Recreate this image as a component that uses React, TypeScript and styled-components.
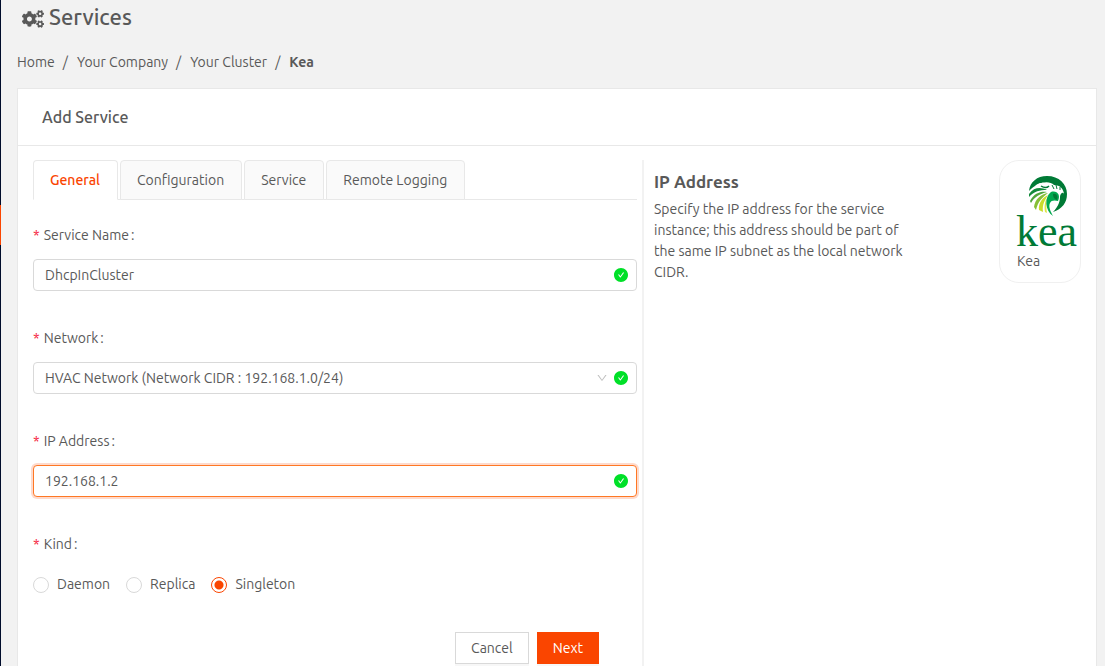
import React, { useState } from 'react';
import styled, { createGlobalStyle, css } from 'styled-components';
import { FaCogs } from 'react-icons/fa';
import { AiFillCheckCircle, AiOutlineDown } from 'react-icons/ai';

const INK = '#595959';
const ACCENT = '#fa4500';
const LINE = '#e8e8e8';

const GlobalStyle = createGlobalStyle`
  *, *::before, *::after { box-sizing: border-box; }
  html, body { margin: 0; }
  body {
    background: #f2f2f2;
    color: ${INK};
    font: 14px/21px Ubuntu, 'Noto Sans', 'Open Sans', sans-serif;
  }
  button, input, select { font: inherit; color: inherit; }
`;

const Shell = styled.div`
  display: flex;
  min-height: 100vh;
`;

const Rail = styled.div`
  flex: none;
  width: 1px;
  padding-top: 205px;
  background: #000c2b;
`;

const RailMarker = styled.div`
  height: 40px;
  background: ${ACCENT};
`;

const Page = styled.main`
  flex: 1;
  min-width: 0;
  display: flex;
  flex-direction: column;
  padding: 0 8px 0 16px;
`;

const PageTitle = styled.h1`
  display: flex;
  align-items: center;
  gap: 5px;
  margin: 0;
  padding: 1px 0 0 5px;
  font-size: 22px;
  line-height: 32px;
  font-weight: 500;

  svg { margin-top: 4px; }
`;

const Breadcrumb = styled.nav`
  padding: 19px 0 15px;

  ol {
    display: flex;
    margin: 0;
    padding: 0;
    list-style: none;
  }
  li + li::before {
    content: '/';
    padding: 0 9px 0 8px;
  }
  a {
    color: inherit;
    text-decoration: none;
  }
  strong { font-weight: 700; }
`;

const Card = styled.section`
  flex: 1;
  border: 1px solid ${LINE};
  border-bottom: 0;
  background: #fff;
`;

const CardTitle = styled.h2`
  margin: 0;
  padding: 16px 24px;
  border-bottom: 1px solid ${LINE};
  font-size: 16px;
  line-height: 24px;
  font-weight: 500;
`;

const CardBody = styled.div`
  display: grid;
  grid-template-columns: 611fr 437fr;
  padding: 14px 15px 0;
`;

const FormColumn = styled.form`
  padding-right: 5px;
  border-right: 2px solid #f2f2f2;
`;

const TabList = styled.div`
  display: flex;
  gap: 2px;
  height: 40px;
  box-shadow: inset 0 -1px ${LINE};
`;

const Tab = styled.button<{ $active: boolean }>`
  padding: 0 17px 0 16px;
  border: 1px solid ${LINE};
  border-radius: 4px 4px 0 0;
  background: #fafafa;
  ${(p) =>
    p.$active &&
    css`
      border-bottom-color: #fff;
      background: #fff;
      color: ${ACCENT};
      font-weight: 500;
    `}
`;

const Field = styled.div`
  margin-bottom: 37px;
`;

const Fields = styled.div`
  padding-top: 25px;
`;

const labelStyle = css`
  display: block;
  margin-bottom: 13px;
  padding: 0;
  &::before {
    content: '*';
    margin-right: 4px;
    color: #f5223d;
  }
  &::after {
    content: ':';
    margin-left: 2px;
  }
`;

const Label = styled.label`
  ${labelStyle}
`;

const Legend = styled.legend`
  ${labelStyle}
`;

const Control = styled.div`
  position: relative;
`;

const Status = styled.span`
  position: absolute;
  inset: 0 8px 0 auto;
  display: flex;
  align-items: center;
  gap: 5px;
  color: #00e028;
  pointer-events: none;
`;

const Chevron = styled(AiOutlineDown)`
  color: #bfbfbf;
`;

const controlStyle = css`
  display: block;
  width: 100%;
  height: 32px;
  padding: 0 11px;
  border: 1px solid #d9d9d9;
  border-radius: 4px;
  outline: 0;
  background: #fff;
`;

const TextInput = styled.input<{ $highlighted?: boolean }>`
  ${controlStyle}
  ${(p) =>
    p.$highlighted &&
    css`
      border-color: #ff7824;
      box-shadow: 0 0 0 2px rgba(250, 69, 0, 0.2);
    `}
`;

const Select = styled.select`
  ${controlStyle}
  appearance: none;
`;

const RadioGroup = styled.fieldset`
  margin: 0 0 37px;
  padding: 0;
  border: 0;
`;

const RadioRow = styled.div`
  display: flex;
  gap: 16px;
  padding-top: 6px;
`;

const RadioLabel = styled.label`
  display: flex;
  align-items: center;
  gap: 8px;
`;

const Radio = styled.input`
  appearance: none;
  width: 16px;
  height: 16px;
  margin: 0;
  border: 1px solid #d9d9d9;
  border-radius: 50%;
  background: #fff;
  &:checked {
    border-color: ${ACCENT};
    background: radial-gradient(circle, ${ACCENT} 4px, #fff 5px);
  }
`;

const Actions = styled.div`
  display: flex;
  justify-content: flex-end;
  gap: 8px;
  padding: 0 38px 24px 0;
`;

const Button = styled.button<{ $primary?: boolean }>`
  height: 32px;
  padding: 0 15px;
  border: 1px solid ${(p) => (p.$primary ? ACCENT : '#d9d9d9')};
  background: ${(p) => (p.$primary ? ACCENT : '#fff')};
  color: ${(p) => (p.$primary ? '#fff' : INK)};
  box-shadow: 0 2px 0 rgba(0, 0, 0, 0.03);
`;

const Help = styled.aside`
  display: flex;
  justify-content: space-between;
  align-items: flex-start;
  padding-left: 10px;
`;

const HelpText = styled.div`
  width: 264px;
  padding-top: 10px;

  h3 {
    margin: 0 0 5px;
    font-size: 17px;
    line-height: 24px;
    font-weight: 700;
  }
  p { margin: 0; }
`;

const ServiceTile = styled.figure`
  flex: none;
  width: 82px;
  margin: 0;
  padding: 13px 2px 10px 16px;
  border: 1px solid #f0f0f0;
  border-radius: 20px;

  svg { display: block; overflow: visible; }
  figcaption { padding: 4px 0 0 1px; }
`;

const KeaLogo = () => (
  <svg width="62" height="73" viewBox="0 0 62 73" role="img" aria-label="Kea">
    <path d="M13 17C14 8 21 2 31 2C43 2 51 10 51 20C51 29 46 35 37 38C41 34 44 29 44 23C44 19 48 17 48 21C48 15 44 11 38 11C33 6 21 8 13 17Z" fill="#007a36" />
    <path d="M20 12C25 9 30 9 34 13" fill="none" stroke="#fff" strokeWidth="2" />
    <path d="M25 12C28 14 31 14 33 12" fill="none" stroke="#007a36" strokeWidth="1.5" />
    <path d="M36 11L38 15M40 11L41 15M44 13L44 16" fill="none" stroke="#007a36" strokeWidth="1" />
    <path d="M13 20C18 13 25 13 31 16C24 16 18 17 13 23Z" fill="#138a3b" />
    <path d="M14 27C18 19 25 17 31 18C24 20 18 23 15 29Z" fill="#4fa53a" />
    <path d="M18 33C19 25 25 20 32 19C26 24 22 27 20 36Z" fill="#86bf36" />
    <path d="M23 36C22 29 27 23 32 21C29 26 26 30 27 38Z" fill="#c9dc2c" />
    <path d="M29 38C28 32 29 27 31 24C30 29 30 34 31 39Z" fill="#dfe64a" />
    <path d="M37 42C29 37 28 23 35 18C41 16 45 21 42 27C39 26 35 26 34 29C32 33 35 38 37 42Z" fill="#00a84f" />
    <path d="M37 20C41 19 42 23 41 26C39 25 37 24 37 20Z" fill="#007a36" />
    <text x="0" y="72" fontFamily="'Liberation Serif', serif" fontSize="44" fill="#007a36">kea</text>
  </svg>
);

const TABS = ['General', 'Configuration', 'Service', 'Remote Logging'];
const KINDS = ['Daemon', 'Replica', 'Singleton'];

export default function App() {
  const [tab, setTab] = useState('General');
  const [kind, setKind] = useState('Singleton');

  return (
    <Shell>
      <GlobalStyle />
      <Rail>
        <RailMarker />
      </Rail>
      <Page>
        <PageTitle>
          <FaCogs size={22} aria-hidden />
          Services
        </PageTitle>
        <Breadcrumb aria-label="Breadcrumb">
          <ol>
            <li><a href="#home">Home</a></li>
            <li><a href="#company">Your Company</a></li>
            <li><a href="#cluster">Your Cluster</a></li>
            <li><strong aria-current="page">Kea</strong></li>
          </ol>
        </Breadcrumb>
        <Card>
          <CardTitle>Add Service</CardTitle>
          <CardBody>
            <FormColumn onSubmit={(e) => e.preventDefault()}>
              <TabList role="tablist">
                {TABS.map((name) => (
                  <Tab
                    key={name}
                    type="button"
                    role="tab"
                    aria-selected={tab === name}
                    $active={tab === name}
                    onClick={() => setTab(name)}
                  >
                    {name}
                  </Tab>
                ))}
              </TabList>
              <Fields>
                <Field>
                  <Label htmlFor="name">Service Name</Label>
                  <Control>
                    <TextInput id="name" defaultValue="DhcpInCluster" />
                    <Status><AiFillCheckCircle size={16} /></Status>
                  </Control>
                </Field>
                <Field>
                  <Label htmlFor="network">Network</Label>
                  <Control>
                    <Select id="network">
                      <option>HVAC Network (Network CIDR : 192.168.1.0/24)</option>
                    </Select>
                    <Status>
                      <Chevron size={12} />
                      <AiFillCheckCircle size={16} />
                    </Status>
                  </Control>
                </Field>
                <Field>
                  <Label htmlFor="address">IP Address</Label>
                  <Control>
                    <TextInput id="address" defaultValue="192.168.1.2" $highlighted />
                    <Status><AiFillCheckCircle size={16} /></Status>
                  </Control>
                </Field>
                <RadioGroup>
                  <Legend>Kind</Legend>
                  <RadioRow>
                    {KINDS.map((name) => (
                      <RadioLabel key={name}>
                        <Radio
                          type="radio"
                          name="kind"
                          checked={kind === name}
                          onChange={() => setKind(name)}
                        />
                        {name}
                      </RadioLabel>
                    ))}
                  </RadioRow>
                </RadioGroup>
              </Fields>
              <Actions>
                <Button type="button">Cancel</Button>
                <Button type="submit" $primary>Next</Button>
              </Actions>
            </FormColumn>
            <Help>
              <HelpText>
                <h3>IP Address</h3>
                <p>
                  Specify the IP address for the service instance; this address should be part of
                  the same IP subnet as the local network CIDR.
                </p>
              </HelpText>
              <ServiceTile>
                <KeaLogo />
                <figcaption>Kea</figcaption>
              </ServiceTile>
            </Help>
          </CardBody>
        </Card>
      </Page>
    </Shell>
  );
}
